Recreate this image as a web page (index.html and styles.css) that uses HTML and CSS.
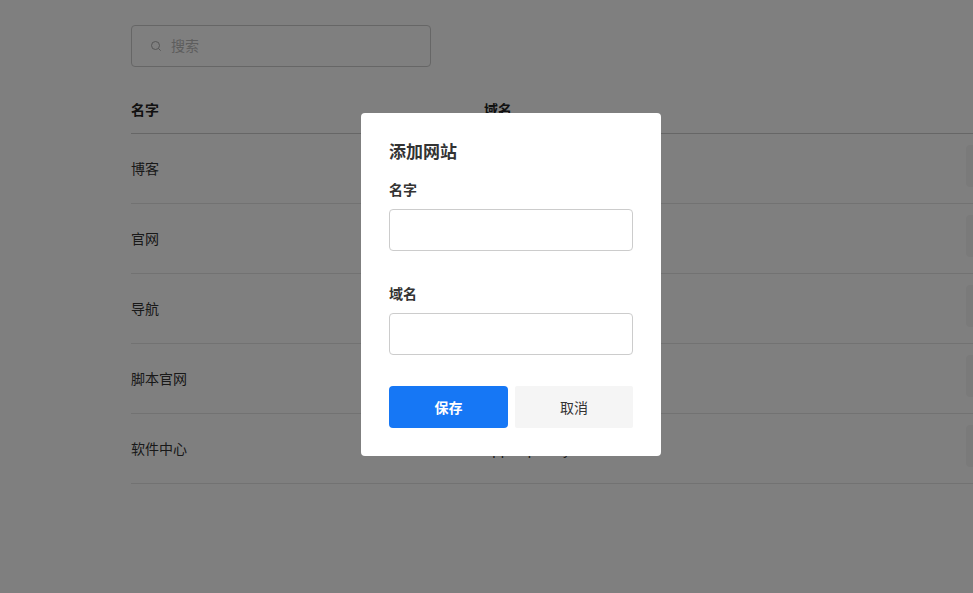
FILE: index.html
```html
<!DOCTYPE html>
<html lang="zh">
<head>
<meta charset="utf-8">
<title>网站</title>
<link rel="stylesheet" href="styles.css">
</head>
<body>
<main class="page">
  <div class="search">
    <svg class="search-icon" width="12" height="12" viewBox="0 0 12 12" fill="none" stroke="currentColor" stroke-width="1"><circle cx="5.5" cy="5.5" r="4"/><path d="M8.5 8.5l2.2 2.2"/></svg>
    <span class="placeholder">搜索</span>
  </div>
  <section class="table">
    <div class="row head"><div class="name">名字</div><div>域名</div></div>
    <div class="row"><div class="name">博客</div><div>blog.example.com</div><button class="act"></button></div>
    <div class="row"><div class="name">官网</div><div>www.example.com</div><button class="act"></button></div>
    <div class="row"><div class="name">导航</div><div>nav.example.com</div><button class="act"></button></div>
    <div class="row"><div class="name">脚本官网</div><div>js.example.com</div><button class="act"></button></div>
    <div class="row"><div class="name">软件中心</div><div>app.expert.ty</div><button class="act"></button></div>
  </section>
</main>
<div class="overlay">
  <form class="modal">
    <h2 class="title">添加网站</h2>
    <label class="label" for="f-name">名字</label>
    <input class="input" id="f-name" type="text">
    <label class="label second" for="f-domain">域名</label>
    <input class="input" id="f-domain" type="text">
    <div class="actions">
      <button class="btn primary" type="button">保存</button>
      <button class="btn" type="button">取消</button>
    </div>
  </form>
</div>
</body>
</html>
```
FILE: styles.css
```css
* { box-sizing: border-box; }
html, body { height: 100%; }
body {
  margin: 0;
  overflow: hidden;
  background: #fff;
  color: #333;
  font: 14px/20px "Noto Sans CJK SC", sans-serif;
}
.page { padding: 25px 0 0 131px; width: 973px; }
.search {
  display: flex;
  align-items: center;
  gap: 9px;
  width: 300px;
  height: 42px;
  padding: 0 0 2px 18px;
  border: 1px solid #ccc;
  border-radius: 4px;
  color: #bbb;
}
.search-icon { color: #aaa; margin-top: 2px; }
.table { margin-top: 24px; }
.row {
  display: flex;
  align-items: center;
  height: 70px;
  padding-bottom: 2px;
  border-bottom: 1px solid #e5e5e5;
}
.row.head {
  height: 43px;
  padding-bottom: 7px;
  border-bottom-color: #ccc;
  font-weight: 700;
  color: #222;
}
.name { width: 353px; flex: none; }
.act {
  position: absolute;
  right: -40px;
  width: 47px;
  height: 42px;
  margin-bottom: 3px;
  border: 0;
  border-radius: 4px;
  background: #f5f5f5;
}
.overlay {
  position: fixed;
  inset: 0;
  display: flex;
  align-items: flex-start;
  justify-content: center;
  padding: 113px 0 0 49px;
  background: rgba(0, 0, 0, .5);
}
.modal {
  display: flex;
  flex-direction: column;
  width: 300px;
  height: 343px;
  padding: 27px 28px 28px;
  background: #fff;
  border-radius: 4px;
}
.title { margin: 0; font-size: 17px; line-height: 22px; font-weight: 700; color: #333; }
.label { margin-top: 17px; height: 30px; line-height: 20px; font-weight: 700; color: #333; }
.label.second { margin-top: 32px; }
.input {
  width: 244px;
  height: 42px;
  flex: none;
  border: 1px solid #ccc;
  border-radius: 4px;
  background: #fff;
}
.actions {
  display: grid;
  grid-template-columns: 119px 118px;
  gap: 7px;
  margin-top: 31px;
}
.btn {
  height: 42px;
  border: 0;
  border-radius: 2px;
  background: #f5f5f5;
  color: #333;
  font: inherit;
}
.btn.primary { background: #1677f5; color: #fff; font-weight: 700; border-radius: 4px; }
```
